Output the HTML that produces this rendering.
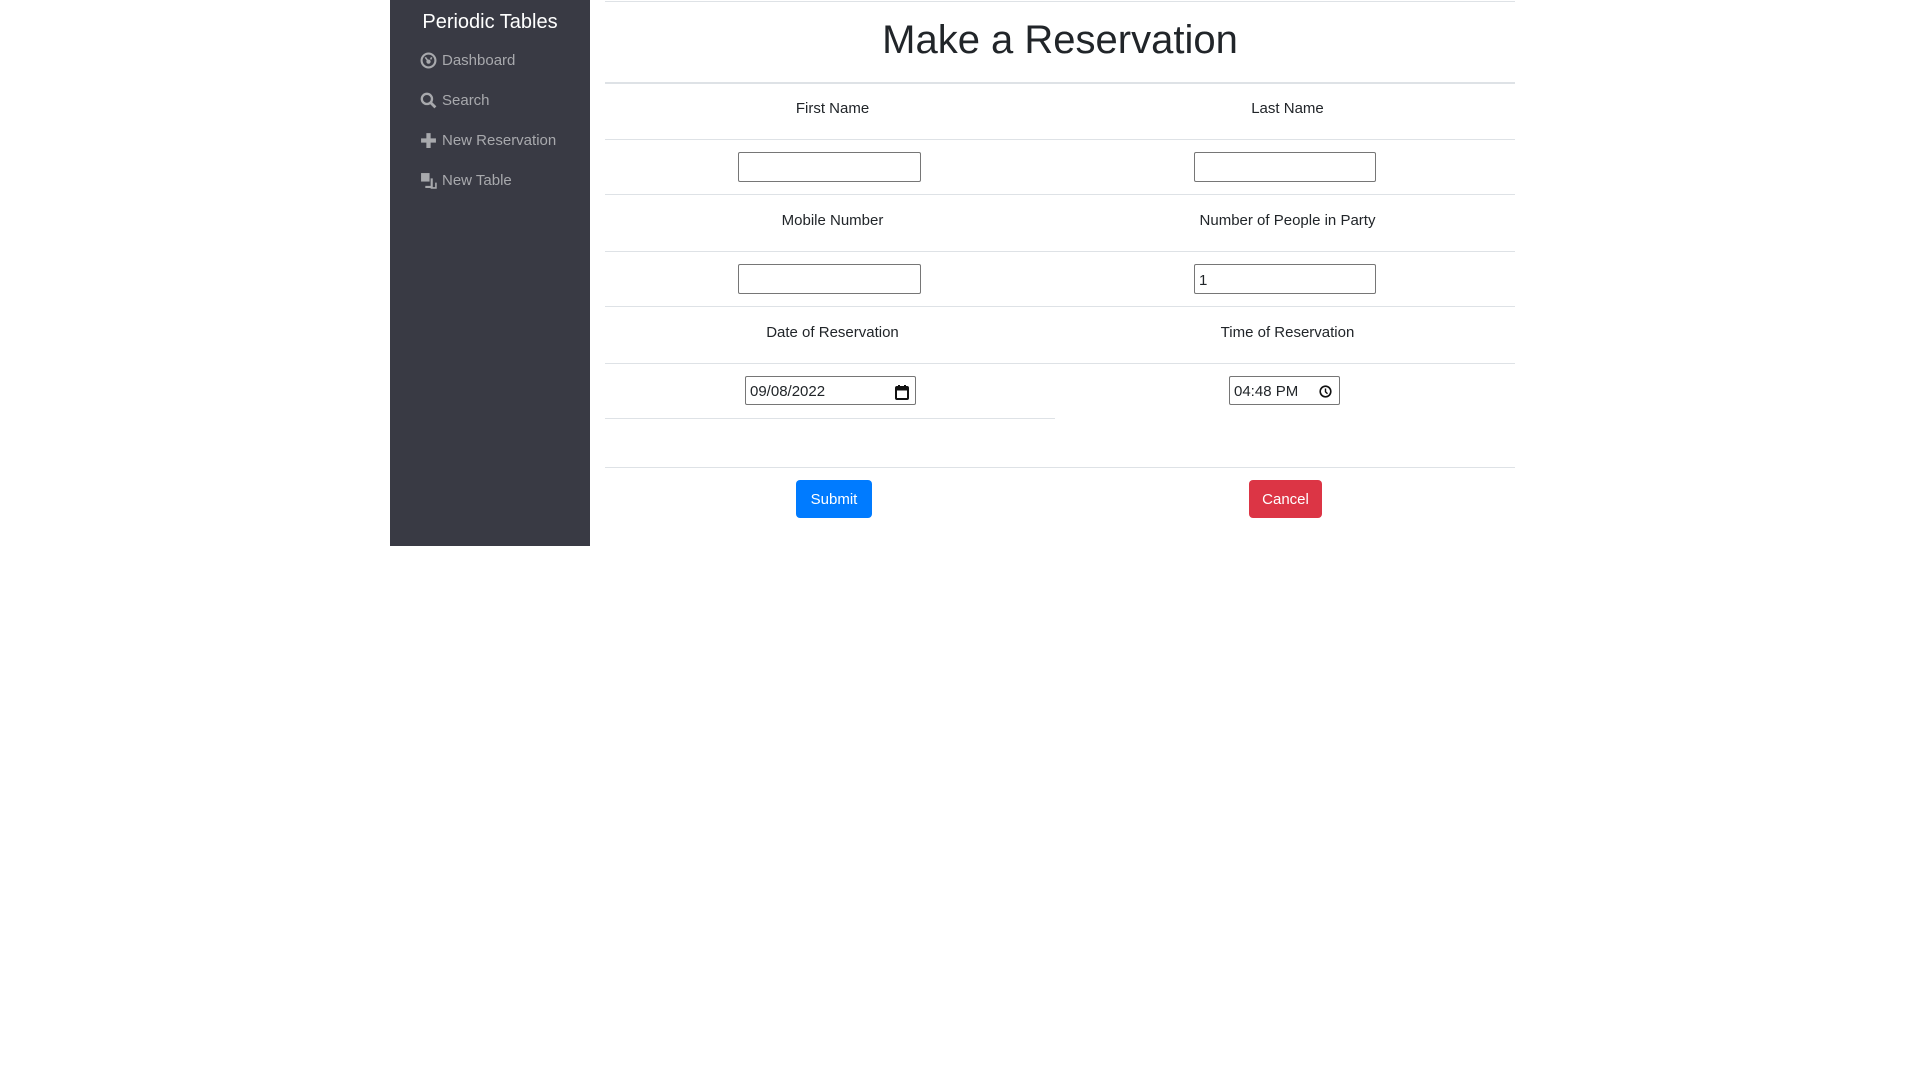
<!DOCTYPE html>
<html><head><meta charset="utf-8"><style>
*{box-sizing:border-box;margin:0;padding:0}
body{width:1920px;height:1080px;background:#fff;font-family:"Liberation Sans",sans-serif;color:#212529;position:relative;overflow:hidden}
.sb{position:absolute;left:390px;top:0;width:200px;height:546px;background:#393a44}
.brand{position:absolute;left:0;width:200px;top:11px;text-align:center;color:#fff;font-size:20px}
.nav{position:absolute;left:30px;color:#a8a9ad;font-size:15px;display:flex;align-items:center;gap:5px}
.nav svg{width:17px;height:17px}
.ln{position:absolute;height:1px;background:#dee2e6;left:605px;width:910px}
.lbl{position:absolute;width:455px;text-align:center;font-size:15px}
.inp{position:absolute;border:1px solid #767676;border-radius:2px;background:#fff;font-size:15px;padding-left:4px;padding-top:2px;display:flex;align-items:center}
.btn{position:absolute;color:#fff;font-size:15px;border-radius:4px;display:flex;align-items:center;justify-content:center;padding-top:1px}
</style></head><body>
<div class="sb">
<div class="brand">Periodic Tables</div>
<div class="nav" style="top:52px"><svg viewBox="0 0 16 16"><circle cx="8" cy="8" r="6.5" fill="none" stroke="#a8a9ad" stroke-width="2"/><circle cx="8" cy="9" r="2" fill="#a8a9ad"/><path d="M5 5l3 4M11 5l-1 2" stroke="#a8a9ad" stroke-width="1.5"/></svg>Dashboard</div>
<div class="nav" style="top:92px"><svg viewBox="0 0 16 16"><circle cx="6.5" cy="6.5" r="4.8" fill="none" stroke="#a8a9ad" stroke-width="2.2"/><path d="M10 10l4.5 4.5" stroke="#a8a9ad" stroke-width="2.6"/></svg>Search</div>
<div class="nav" style="top:132px"><svg viewBox="0 0 16 16"><path d="M8 1v14M1 8h14" stroke="#a8a9ad" stroke-width="4"/></svg>New Reservation</div>
<div class="nav" style="top:172px"><svg viewBox="0 0 16 16"><rect x="1" y="1" width="8" height="8" fill="#a8a9ad"/><path d="M11 6v8H5" fill="none" stroke="#a8a9ad" stroke-width="2"/><path d="M15 10v5H10" fill="none" stroke="#a8a9ad" stroke-width="1.5"/></svg>New Table</div>
</div>
<div class="ln" style="top:1px"></div>
<div style="position:absolute;left:605px;width:910px;top:15px;text-align:center;font-size:40px;line-height:50px">Make a Reservation</div>
<div class="ln" style="top:82px;height:2px"></div>
<div class="lbl" style="left:605px;top:100px">First Name</div>
<div class="lbl" style="left:1060px;top:100px">Last Name</div>
<div class="ln" style="top:139px"></div>
<div class="inp" style="left:738px;top:152px;width:183px;height:30px"></div>
<div class="inp" style="left:1194px;top:152px;width:182px;height:30px"></div>
<div class="ln" style="top:194px"></div>
<div class="lbl" style="left:605px;top:212px">Mobile Number</div>
<div class="lbl" style="left:1060px;top:212px">Number of People in Party</div>
<div class="ln" style="top:251px"></div>
<div class="inp" style="left:738px;top:264px;width:183px;height:30px"></div>
<div class="inp" style="left:1194px;top:264px;width:182px;height:30px">1</div>
<div class="ln" style="top:306px"></div>
<div class="lbl" style="left:605px;top:324px">Date of Reservation</div>
<div class="lbl" style="left:1060px;top:324px">Time of Reservation</div>
<div class="ln" style="top:363px"></div>
<div class="inp" style="left:745px;top:376px;width:171px;height:29px;justify-content:space-between;padding-right:6px">09/08/2022<svg width="14" height="16" viewBox="0 0 14 16"><rect x="1" y="3" width="12" height="12" rx="1" fill="none" stroke="#111" stroke-width="2"/><path d="M1 5h12" stroke="#111" stroke-width="3"/><path d="M4 1v3M10 1v3" stroke="#111" stroke-width="2"/></svg></div>
<div class="inp" style="left:1229px;top:376px;width:111px;height:29px;justify-content:space-between;padding-right:7px">04:48 PM<svg width="13" height="13" viewBox="0 0 13 13"><circle cx="6.5" cy="6.5" r="5.3" fill="none" stroke="#111" stroke-width="1.6"/><path d="M6.5 3.5v3.3l2 2" fill="none" stroke="#111" stroke-width="1.4"/></svg></div>
<div class="ln" style="top:418px;width:450px"></div>
<div class="ln" style="top:467px"></div>
<div class="btn" style="left:796px;top:480px;width:76px;height:38px;background:#007bff">Submit</div>
<div class="btn" style="left:1249px;top:480px;width:73px;height:38px;background:#dc3545">Cancel</div>
</body></html>
